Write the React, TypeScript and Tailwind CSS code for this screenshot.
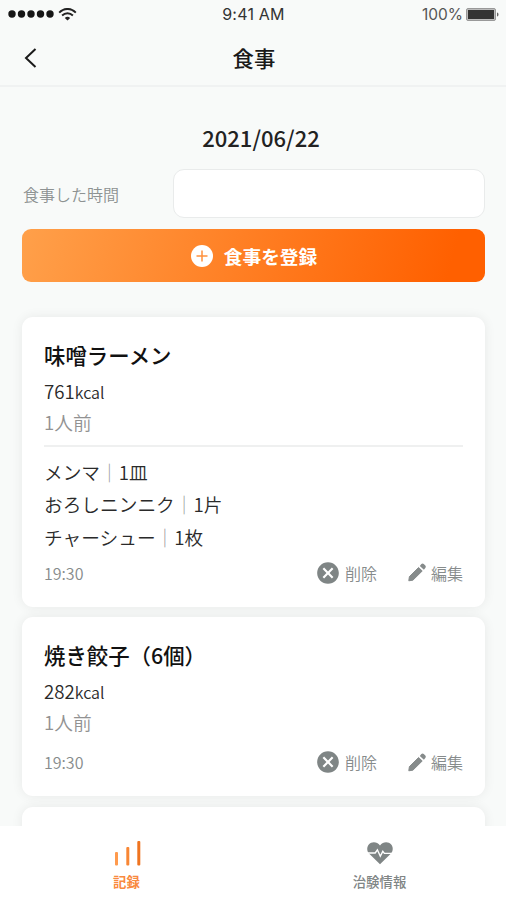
import type { ReactNode } from 'react';
import { MdCancel } from 'react-icons/md';

type Topping = { name: string; amount: string };

type Meal = {
  name: string;
  kcal: number;
  serving: string;
  time: string;
  toppings: Topping[];
};

const meals: Meal[] = [
  {
    name: '味噌ラーメン',
    kcal: 761,
    serving: '1人前',
    time: '19:30',
    toppings: [
      { name: 'メンマ', amount: '1皿' },
      { name: 'おろしニンニク', amount: '1片' },
      { name: 'チャーシュー', amount: '1枚' },
    ],
  },
  { name: '焼き餃子（6個）', kcal: 282, serving: '1人前', time: '19:30', toppings: [] },
];

function StatusBar() {
  return (
    <div className="grid h-7 grid-cols-3 items-center pr-[7px] pl-2 font-['Inter','Liberation_Sans',sans-serif] text-[15.5px] text-[#333]">
      <div className="flex items-center">
        <svg width="46" height="8" viewBox="0 0 46 8" fill="#161616">
          <circle cx="4" cy="4" r="3.7" />
          <circle cx="13.5" cy="4" r="3.7" />
          <circle cx="23" cy="4" r="3.7" />
          <circle cx="32.5" cy="4" r="3.7" />
          <circle cx="42" cy="4" r="3.7" />
        </svg>
        <svg className="ml-1" width="19" height="13" viewBox="0 0 19 13" fill="none" stroke="#222" strokeWidth="1.9">
          <path d="M1.2 4.6C6-.3 13-.3 17.8 4.6" />
          <path d="M4.1 7.5C7.2 4.5 11.8 4.5 14.9 7.5" />
          <path d="M6.8 9.9C8.4 8.4 10.6 8.4 12.2 9.9L9.5 12.5Z" fill="#222" stroke="none" />
        </svg>
      </div>
      <span className="text-center text-base tracking-[0.2px]">9:41 AM</span>
      <div className="flex items-center justify-end gap-[3px] text-[#555]">
        <span className="pt-0.5">100%</span>
        <svg width="33" height="13" viewBox="0 0 33 13">
          <rect x=".5" y=".5" width="29" height="12" rx="1.5" fill="#bbb" stroke="#999" />
          <rect x="2" y="2" width="26" height="9" fill="#333" />
          <path d="M31 4.5C33 5 33 8 31 8.5Z" fill="#666" />
        </svg>
      </div>
    </div>
  );
}

function PencilIcon() {
  return (
    <svg className="mr-px" width="18" height="19" viewBox="0 0 18 19" fill="currentColor">
      <path
        d="M.8 17.8L1.4 13.6L10.6 4.5L14.2 8L4.9 17.2Z"
        stroke="currentColor"
        strokeLinejoin="round"
      />
      <path d="M11.8 2.9L13.4 1.1Q14.6.1 15.8 1.1L17.3 2.6Q18.3 3.8 17.3 5L15.9 6.8Z" />
    </svg>
  );
}

function MealAction({ icon, label }: { icon: ReactNode; label: string }) {
  return (
    <button className="flex items-center gap-1">
      {icon}
      <span>{label}</span>
    </button>
  );
}

function MealCard({ meal }: { meal: Meal }) {
  return (
    <div className="rounded-[11px] bg-white px-[22px] pt-5 pb-[18px] font-[350] shadow-[0_0_12px_rgba(0,0,0,0.07)]">
      <h2 className="text-[21.4px] leading-9 font-medium text-[#111]">{meal.name}</h2>
      <p className="text-[18.7px] leading-[35px] text-[#2a2a2a]">
        {meal.kcal}
        <span className="text-base">kcal</span>
      </p>
      <p className="text-[18.7px] leading-[28px] text-[#929292]">{meal.serving}</p>
      {meal.toppings.length > 0 && (
        <ul className="mt-[9px] border-t-2 border-[#eff0f0] pt-[9px] text-[18.7px] leading-[32.3px] text-[#2a2a2a]">
          {meal.toppings.map((topping) => (
            <li key={topping.name}>
              {topping.name}
              <span className="text-[#999]">｜</span>
              {topping.amount}
            </li>
          ))}
        </ul>
      )}
      <div className={`flex h-8 items-center text-base text-[#868b8b] ${meal.toppings.length > 0 ? 'mt-1' : 'mt-2.5'}`}>
        <span className="mr-auto">{meal.time}</span>
        <div className="flex gap-[31px]">
          <MealAction icon={<MdCancel className="size-[26px] text-[#7f8585]" />} label="削除" />
          <MealAction icon={<PencilIcon />} label="編集" />
        </div>
      </div>
    </div>
  );
}

function BottomNav() {
  return (
    <nav className="relative z-10 grid h-[74px] shrink-0 grid-cols-2 bg-white pt-3.5 text-[13.4px] leading-5 font-medium">
      <button className="flex flex-col items-center gap-1 font-bold text-[#f98a40]">
        <svg width="28" height="27" viewBox="0 0 28 27">
          <rect x="2" y="12" width="3" height="13.5" rx="1" fill="#ff9a4d" />
          <rect x="13.3" y="7" width="3" height="18.5" rx="1" fill="#f88634" />
          <rect x="24.3" y="1" width="3" height="24.5" rx="1" fill="#ef7420" />
        </svg>
        <span>記録</span>
      </button>
      <button className="flex flex-col items-center gap-1 text-[#7f8585]">
        <svg width="28" height="27" viewBox="0 0 28 27">
          <path
            d="M14 24.2L3 13.6C.8 11.2.6 7.2 2.8 4.6C5.6 1.4 11 1.6 14 5.4C17 1.6 22.4 1.4 25.2 4.6C27.4 7.2 27.2 11.2 25 13.6Z"
            fill="currentColor"
          />
          <path d="M2 13H9.2L11.4 9.8L14.3 16.2L16.8 11.4L18.4 13.4H26" fill="none" stroke="#fff" strokeWidth="1.4" />
        </svg>
        <span>治験情報</span>
      </button>
    </nav>
  );
}

export default function App() {
  return (
    <div className="flex h-[900px] w-[506px] flex-col overflow-hidden bg-[#f8faf9] font-['Noto_Sans_CJK_JP',sans-serif]">
      <header className="h-[87px] shrink-0 border-b-2 border-[#f0f2f2]">
        <StatusBar />
        <div className="grid h-[57px] grid-cols-3 items-center pt-0.5 text-[#1a1a1a]">
          <svg className="ml-6" width="13" height="20" viewBox="0 0 13 20" fill="none" stroke="currentColor" strokeWidth="2">
            <path d="M11.5 1L2 10L11.5 19" />
          </svg>
          <h1 className="pt-px pl-0.5 text-center text-[21.4px] font-medium">食事</h1>
        </div>
      </header>

      <main className="min-h-0 flex-1 overflow-hidden pt-[34px] pr-[21px] pl-[22px]">
        <p className="pl-[15px] text-center text-[22px] leading-8 font-medium text-[#222]">2021/06/22</p>
        <div className="mt-4 flex items-center justify-between">
          <label htmlFor="meal-time" className="pl-px text-base font-[350] text-[#8d9292]">
            食事した時間
          </label>
          <input
            id="meal-time"
            className="h-[49px] w-[312px] rounded-[11px] border-[1.5px] border-[#e9ebeb] bg-white"
          />
        </div>
        <button className="mt-[11px] flex h-[53px] w-full items-center justify-center gap-[11px] rounded-[9px] bg-linear-[105deg,#ffa04a,#ff6000_92%] pt-px pl-px text-[18.7px] font-bold text-white">
          <svg width="22" height="22" viewBox="0 0 22 22">
            <circle cx="11" cy="11" r="11" fill="#fff" />
            <path d="M11 5.5V16.5M5.5 11H16.5" stroke="#ff913d" strokeWidth="1.5" />
          </svg>
          食事を登録
        </button>

        <div className="mt-[35px] flex flex-col gap-[10.5px]">
          {meals.map((meal) => (
            <MealCard key={meal.name} meal={meal} />
          ))}
          <div className="h-40 rounded-[11px] bg-white shadow-[0_0_12px_rgba(0,0,0,0.07)]" />
        </div>
      </main>

      <BottomNav />
    </div>
  );
}
